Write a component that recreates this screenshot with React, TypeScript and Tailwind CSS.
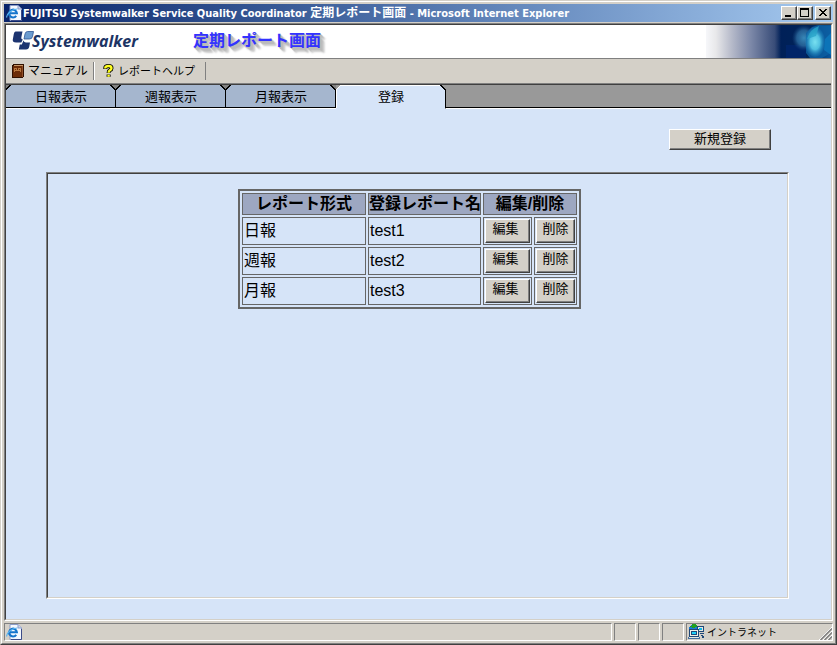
import type { ReactNode } from "react";

const uiFont = "font-['Liberation_Sans','Noto_Sans_CJK_JP',sans-serif]";

const raised =
  "bg-[#d4d0c8] border border-t-white border-l-white border-r-[#404040] border-b-[#404040] shadow-[inset_-1px_-1px_0_#808080]";

function PageIcon() {
  return (
    <svg width="16" height="16" viewBox="0 0 16 16" className="shrink-0" aria-hidden="true">
      <path d="M4 0.5H12L15.5 4V15.5H4Z" fill="#f4f8ff" stroke="#8c9cc8" />
      <path d="M12 0.5V4H15.5" fill="#c8d4f0" stroke="#8c9cc8" />
      <path d="M15.5 5V15.5H5" fill="none" stroke="#3c4c88" />
      <path d="M10.2 10.8A3.9 3.9 0 1 1 10.9 8.3H4" fill="none" stroke="#1474cc" strokeWidth="2.1" />
      <path d="M0.8 12.5C0 9.5 6 3.8 11.5 4" fill="none" stroke="#58b4f0" strokeWidth="1.2" />
    </svg>
  );
}

function BookIcon() {
  return (
    <svg width="12" height="14" viewBox="0 0 12 14" shapeRendering="crispEdges" aria-hidden="true">
      <path d="M1 0H12V13H11V14H0V1H1Z" fill="#301000" />
      <path d="M2 1H11V2H2Z" fill="#c89868" />
      <path d="M1 2H10V13H1Z" fill="#6c2c08" />
      <path d="M2 4H9V8H2Z" fill="#b87840" />
      <path d="M3 5H4V6H3ZM5 4H6V6H5ZM7 5H8V6H7ZM3 7H8V8H3Z" fill="#6c2c08" />
      <path d="M10 2H11V13H10Z" fill="#905028" />
    </svg>
  );
}

function HelpIcon() {
  return (
    <svg width="11" height="14" viewBox="0 0 11 14" aria-hidden="true">
      <path
        d="M2.3 5V4Q2.3 2 5.5 2Q8.5 2 8.5 4.2Q8.5 5.5 6.8 6.3Q5.6 7 5.6 9M5.6 10.6V12.8"
        fill="none"
        stroke="#000"
        strokeWidth="4"
      />
      <path
        d="M2.3 4.6V4Q2.3 2 5.5 2Q8.5 2 8.5 4.2Q8.5 5.5 6.8 6.3Q5.6 7 5.6 8.8M5.6 10.8V12.8"
        fill="none"
        stroke="#ffff20"
        strokeWidth="2.4"
      />
    </svg>
  );
}

function NetworkIcon() {
  return (
    <svg width="17" height="16" viewBox="0 0 17 16" shapeRendering="crispEdges" aria-hidden="true">
      <path d="M3 1H9V6H1V3H3Z" fill="#1878d0" />
      <path d="M4 0H8V1H9V3H7V4H4V3H2V2H4Z" fill="#20a020" />
      <path d="M9 2H16V8H9Z" fill="#204878" />
      <path d="M10 3H15V7H10Z" fill="#e8e8e0" />
      <path d="M11 4H14V6H11Z" fill="#10b8e8" />
      <path d="M1 5H11V13H1Z" fill="#204878" />
      <path d="M2 6H10V12H2Z" fill="#f0f0e8" />
      <path d="M3 7H9V11H3Z" fill="#204878" />
      <path d="M4 8H8V10H4Z" fill="#20d0f8" />
      <path d="M0 13H12V15H0Z" fill="#4870a0" />
      <path d="M1 13H11V14H1Z" fill="#e8e8e0" />
      <path d="M12 9H16V10H12ZM13 11H15V12H13ZM14 12H16V14H14Z" fill="#204878" />
    </svg>
  );
}

function LogoMark() {
  return (
    <svg width="22" height="19" viewBox="0 0 22 19" className="shrink-0" aria-hidden="true">
      <path d="M3.500 0.500H10.500L9.300 6.500Q9 8.500 10.800 8.500L9.300 11.500H4Q0.300 11.500 0.800 8.500L1.800 3Q2.200 0.500 3.500 0.500Z" fill="#1c3470" />
      <path d="M15.500 0.500H21.500L20.500 5.500Q20 8 17.500 8H12L13 3Q13.500 0.500 15.500 0.500Z" fill="#6c9cd0" stroke="#2c5494" strokeWidth="0.800" />
      <path d="M11.500 9.500Q12 11.500 14 11.500H18L17.300 15.500Q16.800 18.500 14 18.500H6.800L7.800 13.500H9.800Z" fill="#1c3470" />
    </svg>
  );
}

function BannerArt() {
  return (
    <svg width="125" height="33" viewBox="0 0 125 33" aria-hidden="true" className="shrink-0">
      <defs>
        <linearGradient id="fade" x1="0" x2="1" y1="0" y2="0">
          <stop offset="0" stopColor="#f6f7fa" />
          <stop offset="0.080" stopColor="#e8e8ea" />
          <stop offset="0.200" stopColor="#b8bccb" />
          <stop offset="0.360" stopColor="#7c88a8" />
          <stop offset="0.550" stopColor="#384c78" />
          <stop offset="0.600" stopColor="#002058" />
          <stop offset="0.850" stopColor="#002458" />
          <stop offset="1" stopColor="#0858a0" />
        </linearGradient>
        <radialGradient id="haze">
          <stop offset="0" stopColor="#3888b8" />
          <stop offset="0.600" stopColor="#2c6ca0" stopOpacity="0.800" />
          <stop offset="1" stopColor="#184880" stopOpacity="0" />
        </radialGradient>
        <radialGradient id="core">
          <stop offset="0" stopColor="#78e0f0" />
          <stop offset="0.500" stopColor="#50c0e0" />
          <stop offset="1" stopColor="#1880bc" stopOpacity="0.200" />
        </radialGradient>
      </defs>
      <rect width="125" height="33" fill="url(#fade)" />
      <path d="M80 20H100V33H80Z" fill="#002468" />
      <ellipse cx="98" cy="13" rx="12" ry="13" fill="url(#haze)" />
      <path d="M100 8L106 2L113 0L125 1V28L116 33H104L100 28Z" fill="#0c60a4" opacity="0.800" />
      <ellipse cx="109" cy="17" rx="10" ry="15" fill="url(#core)" />
      <path d="M101 14Q104 4 113 1L110 11Z" fill="#28a4c8" opacity="0.800" />
      <path d="M119 14L125 8V30L118 25Z" fill="#0c74b8" />
    </svg>
  );
}

function Tab({ label, active = false }: { label: string; active?: boolean }) {
  const fill = active ? "#d6e4f8" : "#a5b6ce";
  return (
    <button
      type="button"
      role="tab"
      aria-selected={active}
      className="relative flex h-6 w-[110px] items-center justify-center text-[13px] leading-6"
    >
      <svg
        className="absolute inset-0"
        width="110"
        height="24"
        viewBox="0 0 110 24"
        shapeRendering="crispEdges"
        aria-hidden="true"
      >
        <path d="M0 24V4L4 0H105L109 4V24Z" fill={fill} />
        {active && <path d="M0.500 23V4.500L4.500 0.500H105" fill="none" stroke="#fff" />}
        {!active && <path d="M0 0H3V1H2V2H1V3H0Z" fill="#808080" />}
        {!active && <path d="M3 0H5V1H4V2H3V3H2V4H1V5H0V3H1V2H2V1H3Z" fill="#000" />}
        <path d="M104 0H106V1H107V2H108V3H109V4H110V23H109V5H108V4H107V3H106V2H105V1H104Z" fill="#000" />
        {!active && <path d="M106 0H110V4H109V3H108V2H107V1H106Z" fill="#808080" />}
        {active ? <path d="M0 23H109V24H0Z" fill={fill} /> : <path d="M0 22H110V23H0Z" fill="#000" />}
        {!active && <path d="M0 23H110V24H0Z" fill="#fff" />}
      </svg>
      <span className="relative">{label}</span>
    </button>
  );
}

function CaptionButton({ label, children }: { label: string; children: ReactNode }) {
  return (
    <button type="button" aria-label={label} className={`flex h-[14px] w-4 items-center justify-center ${raised}`}>
      <svg width="12" height="10" viewBox="0 0 12 10" shapeRendering="crispEdges" aria-hidden="true">
        {children}
      </svg>
    </button>
  );
}

function StatusPane({ className, children }: { className: string; children?: ReactNode }) {
  return (
    <div
      className={`flex h-[18px] items-center border border-t-[#808080] border-l-[#808080] border-r-white border-b-white ${className}`}
    >
      {children}
    </div>
  );
}

const reports = [
  { kind: "日報", name: "test1" },
  { kind: "週報", name: "test2" },
  { kind: "月報", name: "test3" },
];

const th = "h-[22px] border border-[#666] bg-[#9da7c1] p-0 text-base leading-5 font-bold whitespace-nowrap";
const td = "h-7 border border-[#666] p-px leading-6";

export default function App() {
  return (
    <div
      className={`flex min-h-screen w-full flex-col border border-t-[#d4d0c8] border-l-[#d4d0c8] border-r-[#404040] border-b-[#404040] bg-[#d4d0c8] text-black ${uiFont}`}
    >
      <div className="flex grow flex-col border border-t-white border-l-white border-r-[#808080] border-b-[#808080] p-0.5">
        <header className="flex h-[18px] items-center bg-linear-to-r from-[#0a246a] to-[#a6caf0] px-0.5">
          <PageIcon />
          <h1 className="ml-px grow overflow-hidden font-['DejaVu_Sans_Condensed','Noto_Sans','Noto_Sans_CJK_JP',sans-serif] text-[11px] leading-[18px] font-bold whitespace-nowrap text-white">
            FUJITSU Systemwalker Service Quality Coordinator <span className="text-xs leading-[18px]">定期レポート画面</span> -
            Microsoft Internet Explorer
          </h1>
          <CaptionButton label="最小化">
            <path d="M2 7H8V9H2Z" fill="#000" />
          </CaptionButton>
          <CaptionButton label="最大化">
            <path d="M1 0H10V9H1ZM2 2V8H9V2Z" fill="#000" fillRule="evenodd" />
          </CaptionButton>
          <div className="w-0.5" />
          <CaptionButton label="閉じる">
            <path d="M2 1H4V2H5V3H7V2H8V1H10V2H9V3H8V4H7V5H8V6H9V7H10V8H8V7H7V6H5V7H4V8H2V7H3V6H4V5H5V4H4V3H3V2H2Z" fill="#000" />
          </CaptionButton>
        </header>

        <div className="mt-px flex grow flex-col border border-t-[#808080] border-l-[#808080] border-r-white border-b-white">
          <div className="flex grow flex-col border border-t-[#404040] border-l-[#404040] border-r-[#d4d0c8] border-b-[#d4d0c8] bg-[#d6e4f8]">
            <div className="flex h-[34px] items-start border-b border-[#808080] bg-white">
              <div className="flex w-[187px] items-start pt-1.5 pl-1.5">
                <LogoMark />
                <span className="-ml-0.5 font-['Open_Sans',sans-serif] text-base leading-5 font-bold text-[#1c3464] italic">
                  Systemwalker
                </span>
              </div>
              <h2 className="grow pt-1 text-base leading-6 font-bold text-[#3333ff] [text-shadow:1px_1px_0_#bbb,2px_2px_0_#bbb,3px_3px_1px_#bbb,4px_4px_1px_#ccc,5px_5px_2px_#ccc]">
                定期レポート画面
              </h2>
              <BannerArt />
            </div>

            <nav className="flex h-[25px] items-center border-b border-[#808080] bg-[#d4d0c8] text-xs">
              <a href="#manual" className="flex items-center gap-1 pl-1.5">
                <BookIcon />
                <span className="w-[61px] whitespace-nowrap">マニュアル</span>
              </a>
              <div className="ml-1 h-[18px] w-0.5 border-r border-l border-r-white border-l-[#808080]" />
              <a href="#help" className="flex items-center gap-1 pl-2">
                <HelpIcon />
                <span className="text-[11px] whitespace-nowrap">レポートヘルプ</span>
              </a>
              <div className="ml-2.5 h-[18px] w-px bg-[#808080]" />
            </nav>

            <div role="tablist" className="flex h-[25px] border-t border-[#404040] bg-[#999]">
              <Tab label="日報表示" />
              <Tab label="週報表示" />
              <Tab label="月報表示" />
              <Tab label="登録" active />
              <div className="flex grow flex-col justify-end">
                <div className="h-0.5 border-t border-black bg-white" />
              </div>
            </div>

            <main className="flex grow flex-col pt-5 pb-5">
              <div className="flex justify-end pr-[60px]">
                <button
                  type="button"
                  className={`h-[21px] w-[102px] pb-0.5 text-[13px] leading-4 ${raised}`}
                >
                  新規登録
                </button>
              </div>

              <section className="mt-[22px] mr-[42px] ml-10 flex grow flex-col border border-t-[#808080] border-l-[#808080] border-r-white border-b-white">
                <div className="grow border border-t-[#404040] border-l-[#404040] border-r-[#d4d0c8] border-b-[#d4d0c8] pt-[15px] pr-4 pb-4">
                  <table className="mx-auto w-[343px] table-fixed border-separate border-spacing-0.5 border-2 border-[#666]">
                    <colgroup>
                      <col className="w-[124px]" />
                      <col className="w-[113px]" />
                      <col className="w-[49px]" />
                      <col className="w-[43px]" />
                    </colgroup>
                    <thead>
                      <tr>
                        <th className={th}>レポート形式</th>
                        <th className={th}>登録レポート名</th>
                        <th className={th} colSpan={2}>
                          編集/削除
                        </th>
                      </tr>
                    </thead>
                    <tbody>
                      {reports.map((report) => (
                        <tr key={report.name}>
                          <td className={td}>{report.kind}</td>
                          <td className={td}>{report.name}</td>
                          <td className={td}>
                            <button type="button" className={`block h-6 w-full pr-1 pb-1 text-[13px] leading-[18px] ${raised}`}>
                              編集
                            </button>
                          </td>
                          <td className={td}>
                            <button type="button" className={`block h-6 w-full pb-1 text-[13px] leading-[18px] ${raised}`}>
                              削除
                            </button>
                          </td>
                        </tr>
                      ))}
                    </tbody>
                  </table>
                </div>
              </section>
            </main>
          </div>
        </div>

        <footer className="mt-0.5 flex gap-0.5 text-[10px]">
          <StatusPane className="grow pl-px">
            <PageIcon />
          </StatusPane>
          <StatusPane className="w-[22px]" />
          <StatusPane className="w-[22px]" />
          <StatusPane className="w-[22px]" />
          <StatusPane className="w-[147px] gap-0.5 pl-px">
            <NetworkIcon />
            <span className="grow whitespace-nowrap">イントラネット</span>
            <svg width="13" height="13" viewBox="0 0 13 13" className="self-end" aria-hidden="true">
              <path d="M0 13L13 0M4 13L13 4M8 13L13 8" stroke="#fff" />
              <path d="M1.500 13L13 1.500M5.500 13L13 5.500M9.500 13L13 9.500" stroke="#808080" strokeWidth="1.500" />
            </svg>
          </StatusPane>
        </footer>
      </div>
    </div>
  );
}
